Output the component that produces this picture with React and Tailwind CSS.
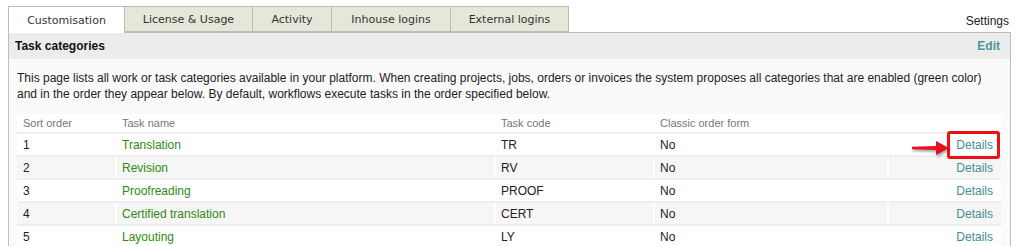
import React from 'react'

const tabs = ['Customisation', 'License & Usage', 'Activity', 'Inhouse logins', 'External logins']
const tabW = ['w-[116px]', 'w-[128px]', 'w-[79px]', 'w-[119px]', 'w-[119px]']

const rows = [
  { n: 1, name: 'Translation', code: 'TR', form: 'No' },
  { n: 2, name: 'Revision', code: 'RV', form: 'No' },
  { n: 3, name: 'Proofreading', code: 'PROOF', form: 'No' },
  { n: 4, name: 'Certified translation', code: 'CERT', form: 'No' },
  { n: 5, name: 'Layouting', code: 'LY', form: 'No' },
]

function Arrow() {
  return (
    <svg width="40" height="16" viewBox="0 0 40 16" className="absolute left-[-45px] top-[4px] drop-shadow-[1px_2px_1px_rgba(0,0,0,0.35)]">
      <path d="M1 6.8 L25 6 L25 1 L38 8 L25 15 L25 10 L1 9.2 Z" fill="#e8101a" />
    </svg>
  )
}

export default function App() {
  return (
    <div className="w-[1019px] h-[246px] overflow-hidden bg-white pl-[8px] pt-[6px] font-['Liberation_Sans',Arial,sans-serif] text-[12px] text-[#222]">
      <div className="flex items-end w-[1003px]">
        {tabs.map((t, i) => (
          <div
            key={t}
            className={`${tabW[i]} h-[26px] pt-[3px] flex items-center justify-center font-['DejaVu_Sans',Verdana,sans-serif] text-[11px] text-[#333] border-t border-l border-[#bdbdbd] ${i === tabs.length - 1 ? 'border-r' : ''} ${i === 0 ? 'bg-white relative z-10 h-[27px] -mb-px' : 'bg-[#e5e7d9] border-b'}`}
          >
            {t}
          </div>
        ))}
        <div className="flex-1 text-right pb-[2px] pr-[2px] text-[#222]">Settings</div>
      </div>

      <div className="w-[1003px] border border-[#bdbdbd] border-b-0 h-[220px]">
        <div className="h-[26px] bg-[#ececec] flex items-center justify-between px-[6px]">
          <span className="font-bold text-[#111]">Task categories</span>
          <span className="font-bold text-[#4b9797] pr-[4px]">Edit</span>
        </div>
        <div className="bg-[#fafafa] h-full pt-[10px] pl-[8px] pr-[9px]">
          <p className="leading-[16px] text-[#222] pt-[1px]">
            This page lists all work or task categories available in your platform. When creating projects, jobs, orders or invoices the system proposes all categories that are enabled (green color) and in the order they appear below. By default, workflows execute tasks in the order specified below.
          </p>
          <table className="w-full mt-[12px] border-collapse bg-white">
            <thead>
              <tr className="h-[19px] text-[11px] text-[#777] text-left">
                <th className="font-normal w-[99px] pl-[6px] pt-[1px] border-b-2 border-[#eeeeee]">Sort order</th>
                <th className="font-normal w-[379px] pl-[5px] pt-[1px] border-b-2 border-l-2 border-[#eeeeee] border-l-white">Task name</th>
                <th className="font-normal w-[159px] pl-[5px] pt-[1px] border-b-2 border-l-2 border-[#eeeeee] border-l-white">Task code</th>
                <th className="font-normal w-[234px] pl-[5px] pt-[1px] border-b-2 border-l-2 border-[#eeeeee] border-l-white">Classic order form</th>
                <th className="font-normal border-b-2 border-l-2 border-[#eeeeee] border-l-white"></th>
              </tr>
            </thead>
            <tbody>
              {rows.map((r, i) => (
                <tr key={r.n} className={`h-[23px] ${i % 2 === 1 ? 'bg-[#f6f6f6]' : 'bg-white'}`}>
                  <td className="pl-[6px] border-b-2 border-[#eeeeee]">{r.n}</td>
                  <td className="pl-[5px] text-[#2f8a12] border-b-2 border-l-2 border-[#eeeeee] border-l-white">{r.name}</td>
                  <td className="pl-[5px] border-b-2 border-l-2 border-[#eeeeee] border-l-white">{r.code}</td>
                  <td className="pl-[5px] border-b-2 border-l-2 border-[#eeeeee] border-l-white">{r.form}</td>
                  <td className="pr-[8px] text-right text-[#3f9090] border-b-2 border-l-2 border-[#eeeeee] border-l-white">
                    <span className="relative inline-block">
                      Details
                      {i === 0 && (
                        <>
                          <span className="absolute left-[-9px] right-[-7px] top-[-5px] bottom-[-5px] border-[3px] border-[#ee1111] rounded-[3px]" />
                          <Arrow />
                        </>
                      )}
                    </span>
                  </td>
                </tr>
              ))}
            </tbody>
          </table>
        </div>
      </div>
    </div>
  )
}
